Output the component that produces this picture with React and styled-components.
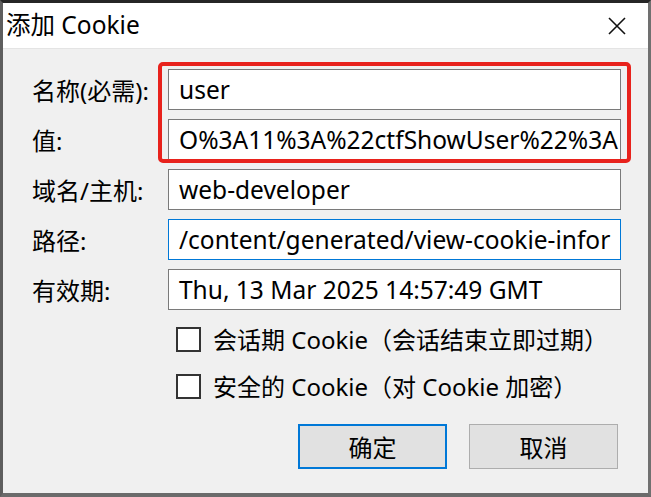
import styled, { createGlobalStyle } from "styled-components";

const Global = createGlobalStyle`
  html, body { margin: 0; padding: 0; background: #2b2b2b; }
  body { font-family: "Noto Sans", "Noto Sans CJK SC", sans-serif; }
`;

const Window = styled.div`
  position: relative;
  width: 651px;
  height: 497px;
  box-sizing: border-box;
  border-top: 3px solid #262626;
  border-left: 3px solid #5e5e5e;
  border-right: 3px solid #707070;
  border-bottom: 4px solid #6b6b6b;
  background: #f0f0f0;
  display: flex;
  flex-direction: column;
  overflow: hidden;
`;

const TitleBar = styled.div`
  height: 45px;
  flex: none;
  background: #fff;
  border-bottom: 1px solid #e4e4e4;
  display: flex;
  align-items: center;
  justify-content: space-between;
  padding: 0 22px 0 3px;
`;

const Title = styled.div`
  font-size: 24.5px;
  line-height: 30px;
  color: #000;
  margin-top: -2px;
`;

const Body = styled.div`
  flex: 1;
  padding: 20px 27px 0 29px;
  display: flex;
  flex-direction: column;
`;

const Form = styled.div`
  display: grid;
  grid-template-columns: 136px 453px;
  grid-auto-rows: 41px;
  row-gap: 9px;
`;

const Label = styled.div`
  font-size: 24px;
  color: #000;
  display: flex;
  align-items: center;
`;

const Field = styled.div`
  box-sizing: border-box;
  background: #fff;
  border: 1px solid ${(p) => (p.$focused ? "#0078d7" : "#7a7a7a")};
  padding: 0 0 0 10px;
  font-size: 24.5px;
  color: #000;
  white-space: nowrap;
  overflow: hidden;
  display: flex;
  align-items: center;
`;

const Checks = styled.div`
  display: flex;
  flex-direction: column;
  gap: 22px;
  margin: 17px 0 0 144px;
`;

const CheckRow = styled.label`
  display: flex;
  align-items: center;
  gap: 12px;
  font-size: 24px;
  line-height: 25px;
  color: #000;
  height: 25px;
`;

const Box = styled.span`
  width: 25px;
  height: 25px;
  box-sizing: border-box;
  border: 2px solid #333;
  background: #fff;
  flex: none;
`;

const Buttons = styled.div`
  display: flex;
  justify-content: flex-end;
  gap: 22px;
  margin-top: 25px;
  padding-right: 3px;
`;

const Button = styled.div`
  width: 149px;
  height: 45px;
  box-sizing: border-box;
  background: #e1e1e1;
  border: ${(p) => (p.$primary ? "2px solid #0078d7" : "1px solid #adadad")};
  display: flex;
  align-items: center;
  justify-content: center;
  font-size: 24px;
  color: #000;
`;

const Highlight = styled.div`
  position: absolute;
  left: 155px;
  top: 59px;
  width: 473px;
  height: 101px;
  box-sizing: border-box;
  border: 4px solid #e8221c;
  border-radius: 5px;
  pointer-events: none;
`;

const CloseIcon = () => (
  <svg width="18" height="18" viewBox="0 0 18 18">
    <path d="M1 1 L17 17 M17 1 L1 17" stroke="#111" strokeWidth="1.6" fill="none" />
  </svg>
);

const fields = [
  { label: "名称(必需):", value: "user" },
  { label: "值:", value: "O%3A11%3A%22ctfShowUser%22%3A" },
  { label: "域名/主机:", value: "web-developer" },
  { label: "路径:", value: "/content/generated/view-cookie-infor", focused: true },
  { label: "有效期:", value: "Thu, 13 Mar 2025 14:57:49 GMT" },
];

export default function App() {
  return (
    <>
      <Global />
      <Window>
        <TitleBar>
          <Title>添加 Cookie</Title>
          <CloseIcon />
        </TitleBar>
        <Body>
          <Form>
            {fields.map((f) => [
              <Label key={f.label}>{f.label}</Label>,
              <Field key={f.label + "v"} $focused={f.focused}>{f.value}</Field>,
            ])}
          </Form>
          <Checks>
            <CheckRow><Box />会话期 Cookie（会话结束立即过期）</CheckRow>
            <CheckRow><Box />安全的 Cookie（对 Cookie 加密）</CheckRow>
          </Checks>
          <Buttons>
            <Button $primary>确定</Button>
            <Button>取消</Button>
          </Buttons>
        </Body>
        <Highlight />
      </Window>
    </>
  );
}
